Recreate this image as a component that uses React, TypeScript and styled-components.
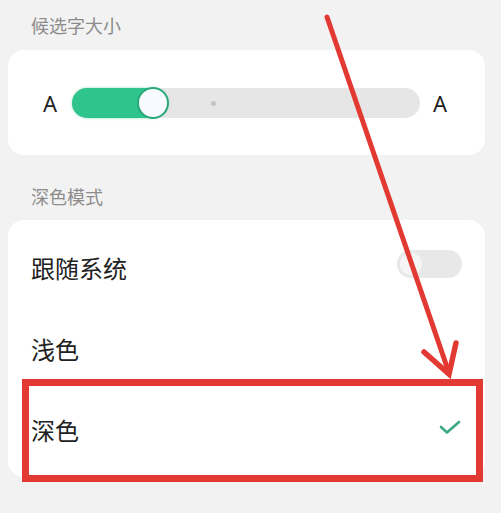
import styled, { createGlobalStyle } from "styled-components";

const GlobalStyle = createGlobalStyle`
  html, body {
    margin: 0;
    padding: 0;
    background: #f2f2f2;
  }
  body {
    font-family: "Noto Sans", "Noto Sans CJK SC", sans-serif;
  }
`;

const Page = styled.div`
  position: relative;
  width: 501px;
  height: 513px;
  overflow: hidden;
  padding: 13px 0 0 8px;
  box-sizing: border-box;
`;

const SectionTitle = styled.div<{ $top?: number }>`
  margin-top: ${(p) => p.$top ?? 0}px;
  padding-left: 23px;
  height: 24px;
  line-height: 24px;
  font-size: 18px;
  color: #8c8c8c;
  font-family: "Noto Sans CJK SC", sans-serif;
`;

const Card = styled.div<{ $top: number }>`
  margin-top: ${(p) => p.$top}px;
  width: 477px;
  background: #ffffff;
  border-radius: 16px;
  box-sizing: border-box;
`;

const SliderCard = styled(Card)`
  height: 105px;
  display: flex;
  align-items: center;
  padding: 0 0 0 35px;
`;

const Letter = styled.span`
  font-family: "Noto Sans", sans-serif;
  font-size: 22px;
  color: #222;
  width: 29px;
  line-height: 1;
`;

const Track = styled.div`
  position: relative;
  width: 348px;
  height: 30px;
  border-radius: 15px;
  background: #e6e6e6;
  margin-right: 13px;
`;

const Fill = styled.div`
  position: absolute;
  left: 0;
  top: 0;
  height: 30px;
  width: 96px;
  border-radius: 15px;
  background: #2fc48b;
  box-shadow: 0 0 3px rgba(47, 196, 139, 0.5);
`;

const Knob = styled.div`
  position: absolute;
  left: 65px;
  top: -1px;
  width: 28px;
  height: 28px;
  border-radius: 50%;
  background: #f7fbff;
  border: 2px solid #2aa87a;
`;

const Tick = styled.div`
  position: absolute;
  left: 139px;
  top: 13px;
  width: 5px;
  height: 5px;
  border-radius: 50%;
  background: #c4c4c4;
`;

const ListCard = styled(Card)`
  padding: 7px 0;
`;

const Row = styled.div`
  height: 81px;
  display: flex;
  align-items: center;
  justify-content: space-between;
  padding: 0 23px 0 23px;
`;

const RowLabel = styled.span`
  font-family: "Noto Sans CJK SC", sans-serif;
  font-size: 24px;
  color: #222;
`;

const Switch = styled.div`
  width: 65px;
  height: 28px;
  border-radius: 14px;
  background: #e8e8e8;
  position: relative;
  margin-top: -7px;
  &::after {
    content: "";
    position: absolute;
    left: 3px;
    top: 3px;
    width: 22px;
    height: 22px;
    border-radius: 50%;
    background: #f5f5f5;
  }
`;

const Check = styled.svg`
  margin-right: 1px;
  margin-top: -6px;
`;

const Highlight = styled.div`
  position: absolute;
  left: 22px;
  top: 379px;
  width: 461px;
  height: 103px;
  border: 7px solid #e23a33;
  box-sizing: border-box;
  pointer-events: none;
`;

const Overlay = styled.svg`
  position: absolute;
  left: 0;
  top: 0;
  pointer-events: none;
`;

export default function App() {
  return (
    <>
      <GlobalStyle />
      <Page>
        <SectionTitle>候选字大小</SectionTitle>
        <SliderCard $top={13}>
          <Letter>A</Letter>
          <Track>
            <Fill />
            <Knob />
            <Tick />
          </Track>
          <Letter>A</Letter>
        </SliderCard>

        <SectionTitle $top={29}>深色模式</SectionTitle>
        <ListCard $top={12}>
          <Row>
            <RowLabel>跟随系统</RowLabel>
            <Switch />
          </Row>
          <Row>
            <RowLabel>浅色</RowLabel>
          </Row>
          <Row>
            <RowLabel>深色</RowLabel>
            <Check width="22" height="16" viewBox="0 0 22 16">
              <polyline
                points="2,8 8,13.5 20,3"
                fill="none"
                stroke="#3aa884"
                strokeWidth="2.6"
                strokeLinecap="round"
                strokeLinejoin="round"
              />
            </Check>
          </Row>
        </ListCard>

        <Highlight />
        <Overlay width="501" height="513" viewBox="0 0 501 513">
          <line
            x1="327"
            y1="17"
            x2="448"
            y2="370"
            stroke="#e23a33"
            strokeWidth="5"
            strokeLinecap="round"
          />
          <polyline
            points="424,352 449,374 456,343"
            fill="none"
            stroke="#e23a33"
            strokeWidth="5.5"
            strokeLinejoin="miter"
            strokeLinecap="round"
          />
        </Overlay>
      </Page>
    </>
  );
}
